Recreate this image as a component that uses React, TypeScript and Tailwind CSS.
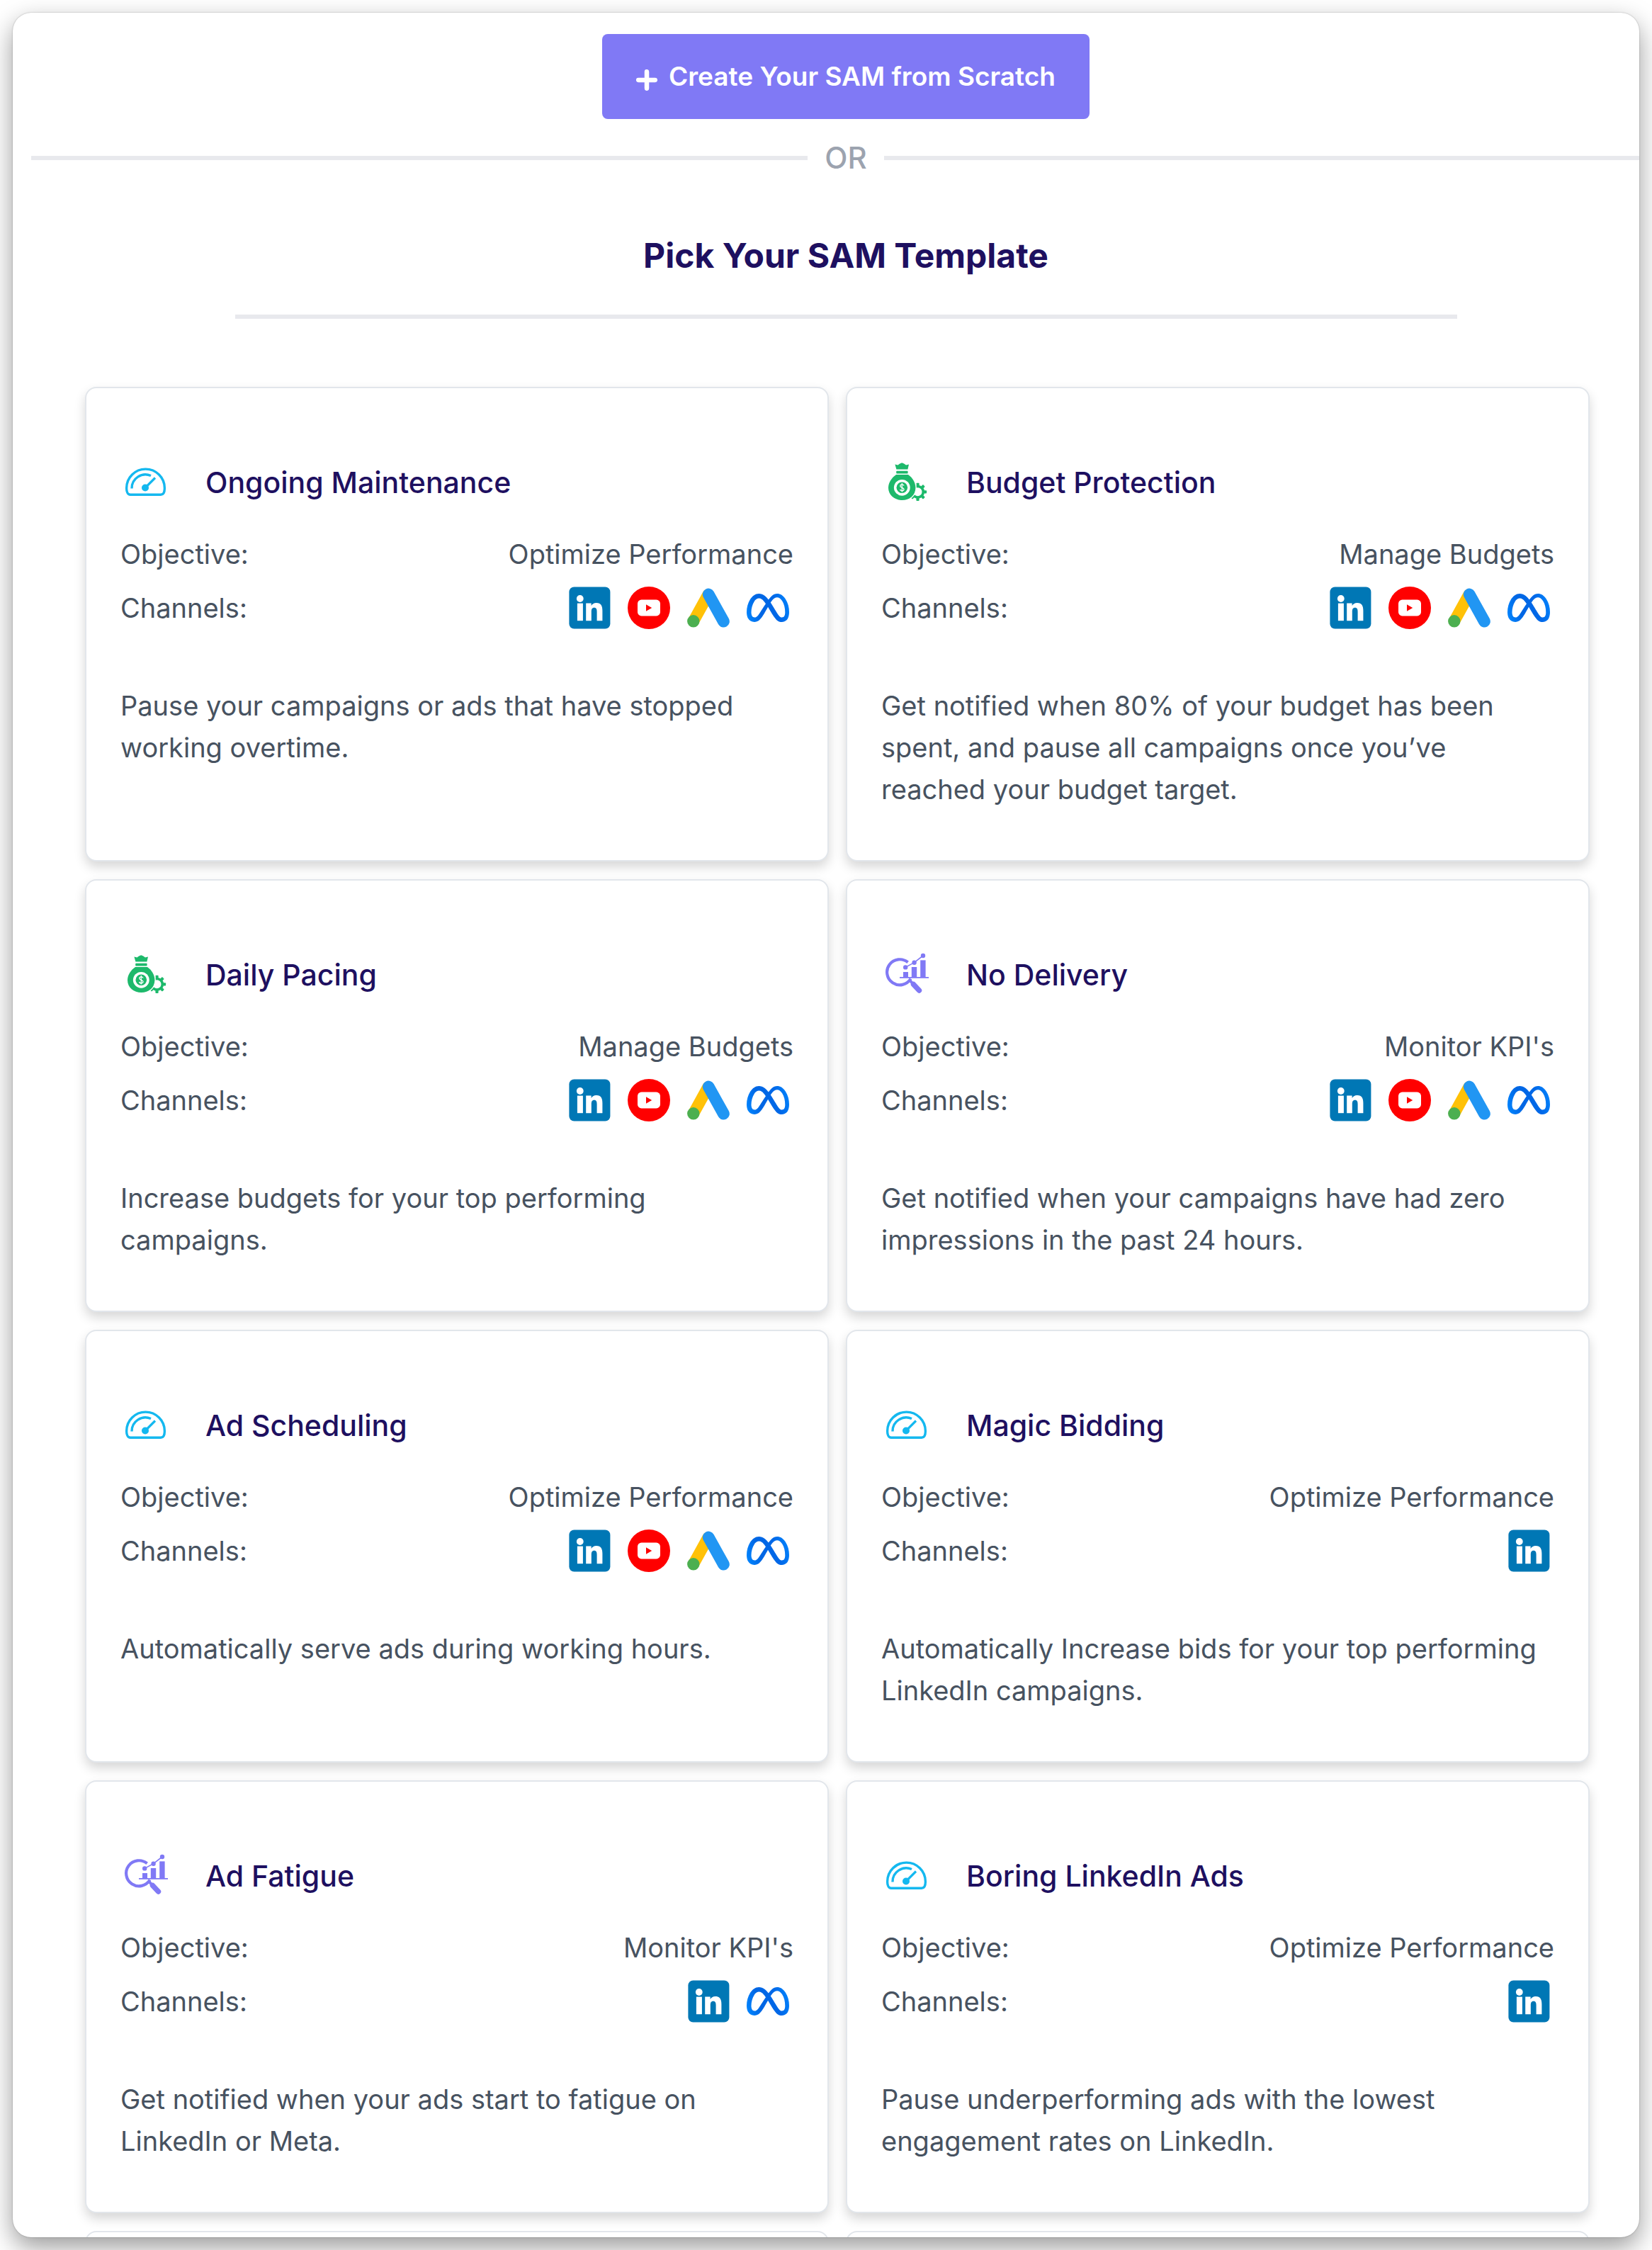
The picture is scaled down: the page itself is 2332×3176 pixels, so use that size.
import React from "react";
import { SiMeta } from "react-icons/si";

type Channel = "linkedin" | "youtube" | "ads" | "meta";
type IconKind = "gauge" | "budget" | "kpi";

interface Template {
  title: string;
  icon: IconKind;
  objective: string;
  channels: Channel[];
  description: string;
}

const ALL: Channel[] = ["linkedin", "youtube", "ads", "meta"];

const TEMPLATES: Template[] = [
  {
    title: "Ongoing Maintenance",
    icon: "gauge",
    objective: "Optimize Performance",
    channels: ALL,
    description: "Pause your campaigns or ads that have stopped working overtime.",
  },
  {
    title: "Budget Protection",
    icon: "budget",
    objective: "Manage Budgets",
    channels: ALL,
    description:
      "Get notified when 80% of your budget has been spent, and pause all campaigns once you’ve reached your budget target.",
  },
  {
    title: "Daily Pacing",
    icon: "budget",
    objective: "Manage Budgets",
    channels: ALL,
    description: "Increase budgets for your top performing campaigns.",
  },
  {
    title: "No Delivery",
    icon: "kpi",
    objective: "Monitor KPI's",
    channels: ALL,
    description: "Get notified when your campaigns have had zero impressions in the past 24 hours.",
  },
  {
    title: "Ad Scheduling",
    icon: "gauge",
    objective: "Optimize Performance",
    channels: ALL,
    description: "Automatically serve ads during working hours.",
  },
  {
    title: "Magic Bidding",
    icon: "gauge",
    objective: "Optimize Performance",
    channels: ["linkedin"],
    description: "Automatically Increase bids for your top performing LinkedIn campaigns.",
  },
  {
    title: "Ad Fatigue",
    icon: "kpi",
    objective: "Monitor KPI's",
    channels: ["linkedin", "meta"],
    description: "Get notified when your ads start to fatigue on LinkedIn or Meta.",
  },
  {
    title: "Boring LinkedIn Ads",
    icon: "gauge",
    objective: "Optimize Performance",
    channels: ["linkedin"],
    description: "Pause underperforming ads with the lowest engagement rates on LinkedIn.",
  },
];

function GaugeIcon() {
  return (
    <svg viewBox="0 0 60 60" className="size-[60px] overflow-visible text-[#14b8ef]" fill="none" stroke="currentColor" strokeWidth="3.4" aria-hidden="true">
      <path d="M8 47.3C4 47.3 2.6 42.5 2.6 38A26.9 26.9 0 0 1 56.4 38C56.4 42.5 55 47.3 51 47.3Z" />
      <path d="M10 38.5A19.3 19.3 0 0 1 37 20.5" />
      <path d="M29 37.5L43 23.5" strokeWidth="3.2" />
      <circle cx="29" cy="37.5" r="5" fill="currentColor" stroke="none" />
    </svg>
  );
}

function BudgetIcon() {
  return (
    <svg viewBox="0 0 60 60" className="size-[60px] overflow-visible text-[#1db96b]" fill="currentColor" aria-hidden="true">
      <g transform="translate(45.5 43.3)">
        <circle r="7.8" fill="none" stroke="currentColor" strokeWidth="3.6" />
        {[0, 45, 90, 135, 180, 225, 270, 315].map((a) => (
          <rect key={a} x="-2.1" y="-12.6" width="4.2" height="5" rx="1" transform={"rotate(" + a + ")"} />
        ))}
      </g>
      <path
        d="M15 19H32C38 23 42.4 30 42.4 37.5C42.4 48 34 55 23.5 55S4 48 4 37.5C4 30 9 23 15 19Z"
        stroke="#fff"
        strokeWidth="3"
        paintOrder="stroke"
      />
      <path d="M13.4 4.6L17.4 5.6L20.2 3.4L23.2 2.2L26.2 3.4L29 5.6L33 4.6L31.4 11.6H15.4Z" />
      <rect x="15.2" y="13.8" width="16.4" height="3.8" rx="1" />
      <circle cx="23.3" cy="37.3" r="11.4" fill="#fff" />
      <circle cx="23.3" cy="37.3" r="7.8" />
      <path
        d="M26 34.6C25.6 33.2 24.5 32.8 23.3 32.8C21.8 32.8 20.8 33.6 20.8 34.9C20.8 38 26 36.6 26 39.6C26 41 24.8 41.8 23.3 41.8C21.8 41.8 20.8 41 20.6 39.8M23.3 31V43.6"
        fill="none"
        stroke="#fff"
        strokeWidth="1.3"
      />
    </svg>
  );
}

function KpiIcon() {
  return (
    <svg viewBox="0 0 60 60" className="size-[60px] overflow-visible text-[#8079f5]" fill="currentColor" aria-hidden="true">
      <path d="M31.6 12.4A18 18 0 1 0 35.6 35.5" fill="none" stroke="currentColor" strokeWidth="4.2" />
      <path d="M34.5 38.2L38 41.8" stroke="currentColor" strokeWidth="4" />
      <path d="M39.5 43.5L47.5 52" stroke="currentColor" strokeWidth="7.4" strokeLinecap="round" />
      <rect x="20" y="33" width="41" height="1.8" />
      <rect x="25" y="26" width="7" height="7.4" />
      <rect x="36.8" y="19" width="7.4" height="14.4" />
      <rect x="49.2" y="9.4" width="7.4" height="24" />
      <path d="M28.2 19.4L40.6 12.6L53 3" fill="none" stroke="currentColor" strokeWidth="1.6" />
      <circle cx="28.2" cy="19.4" r="3.2" />
      <circle cx="40.6" cy="12.8" r="3.2" />
      <circle cx="53" cy="3" r="3.2" />
    </svg>
  );
}

function TemplateIcon({ kind }: { kind: IconKind }) {
  if (kind === "gauge") return <GaugeIcon />;
  if (kind === "budget") return <BudgetIcon />;
  return <KpiIcon />;
}

function ChannelIcon({ channel }: { channel: Channel }) {
  if (channel === "linkedin") {
    return (
      <svg viewBox="0 0 60 60" className="size-[60px]" role="img" aria-label="LinkedIn">
        <rect x="1.4" y="0.5" width="58" height="59" rx="7" fill="#0077b5" />
        <circle cx="16.8" cy="17" r="4.9" fill="#fff" />
        <rect x="12.9" y="23.6" width="8" height="24.6" fill="#fff" />
        <path
          fill="#fff"
          d="M25.2 23.6H32.6V27C33.8 24.8 36.4 23 39.8 23C46.6 23 48.4 27.6 48.4 34V48.2H40.6V35.6C40.6 32.4 40 29.8 36.8 29.8C33.6 29.8 32.8 32.2 32.8 35.4V48.2H25.2Z"
        />
      </svg>
    );
  }
  if (channel === "youtube") {
    return (
      <svg viewBox="0 0 60 60" className="size-[60px]" role="img" aria-label="YouTube">
        <circle cx="30" cy="30" r="30" fill="#f00" />
        <rect x="14" y="18.6" width="32" height="22.8" rx="5.5" fill="#fff" />
        <path d="M26 25.2L34.2 30L26 34.8Z" fill="#f00" />
      </svg>
    );
  }
  if (channel === "ads") {
    return (
      <svg viewBox="0 0 60 60" className="size-[60px]" role="img" aria-label="Google Ads" strokeLinecap="round">
        <path d="M29.5 11.5L9 48.6" stroke="#ffc107" strokeWidth="16.4" />
        <path d="M30.2 11L51.4 49.2" stroke="#2196f3" strokeWidth="16.8" />
        <circle cx="8.8" cy="48.8" r="8.7" fill="#4caf50" />
      </svg>
    );
  }
  return <SiMeta className="size-[60px]" style={{ fill: "url(#meta-blue)" }} role="img" aria-label="Meta" />;
}

function TemplateCard({ template }: { template: Template }) {
  return (
    <article className="rounded-2xl border-2 border-[#e2e6eb] bg-white px-12 pt-[103px] pb-[70px] shadow-[0_8px_16px_rgba(0,0,0,0.16)]">
      <div className="flex items-center gap-[54px] pl-[6px]">
        <TemplateIcon kind={template.icon} />
        <h3 className="text-[41px] leading-[60px] font-medium text-[#1e1060]">{template.title}</h3>
      </div>
      <dl className="mt-[33px] text-[38px] text-[#475260]">
        <div className="flex items-center justify-between">
          <dt className="leading-[76px]">Objective:</dt>
          <dd className="leading-[76px]">{template.objective}</dd>
        </div>
        <div className="flex items-center justify-between">
          <dt className="leading-[76px]">Channels:</dt>
          <dd className="flex gap-6 pr-[6px]">
            {template.channels.map((c) => (
              <ChannelIcon key={c} channel={c} />
            ))}
          </dd>
        </div>
      </dl>
      <p className="mt-[71px] text-[38px] leading-[59px] text-[#475260]">{template.description}</p>
    </article>
  );
}

export default function App() {
  return (
    <div className="h-screen overflow-hidden bg-white p-[18px] font-['Inter',sans-serif]">
      <svg className="absolute size-0" aria-hidden="true">
        <defs>
          <linearGradient id="meta-blue" x1="0" x2="1" y1="0.6" y2="0.4">
            <stop offset="0" stopColor="#0081fb" />
            <stop offset="0.3" stopColor="#0066e4" />
            <stop offset="0.7" stopColor="#0068e8" />
            <stop offset="1" stopColor="#0081fb" />
          </linearGradient>
        </defs>
      </svg>
      <main className="h-full overflow-hidden rounded-[26px] bg-white shadow-[0_0_2px_rgba(0,0,0,0.3),0_14px_36px_rgba(0,0,0,0.4)]">
        <div className="-mr-[30px] ml-[26px] flex flex-col items-center pt-[30px]">
          <button type="button" className="flex h-[120px] items-center gap-4 rounded-lg bg-[#8079f5] px-12 text-[37px] font-semibold text-white">
            <svg viewBox="0 0 30 30" className="mt-[10px] size-[30px]" stroke="currentColor" strokeWidth="6.5" strokeLinecap="round" aria-hidden="true">
              <path d="M15 3.2V26.8M3.2 15H26.8" />
            </svg>
            <span>Create Your SAM from Scratch</span>
          </button>
          <div className="mt-[25px] flex w-full items-center gap-6 text-[42px] leading-[60px] font-medium text-[#9ca3af]">
            <span className="h-[6px] flex-1 bg-[#e8e9ed]" />
            OR
            <span className="h-[6px] flex-1 bg-[#e8e9ed]" />
          </div>
          <h2 className="mt-[76px] text-[48px] leading-[64px] font-bold text-[#1e1060]">Pick Your SAM Template</h2>
          <hr className="mt-[51px] h-[6px] w-3/4 border-0 bg-[#e8e9ed]" />
        </div>
        <div className="mt-24 grid grid-cols-2 gap-x-6 gap-y-[25px] pr-[70px] pl-[102px]">
          {TEMPLATES.map((t) => (
            <TemplateCard key={t.title} template={t} />
          ))}
          <article className="h-[610px] rounded-2xl border-2 border-[#e2e6eb] bg-white" />
          <article className="h-[610px] rounded-2xl border-2 border-[#e2e6eb] bg-white" />
        </div>
      </main>
    </div>
  );
}
